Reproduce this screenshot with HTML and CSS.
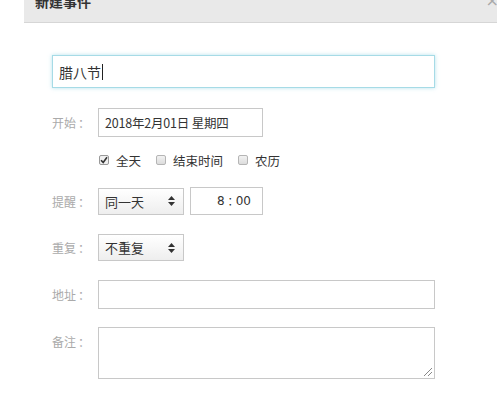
FILE: index.html
```html
<!DOCTYPE html>
<html lang="zh">
<head>
<meta charset="utf-8">
<link rel="stylesheet" href="styles.css">
</head>
<body>
<div class="header">
  <span class="title">新建事件</span>
  <span class="close">×</span>
</div>
<div class="form">
  <div class="title-input"><span class="title-text">腊八节</span><span class="caret"></span></div>

  <div class="row row-start">
    <span class="label">开始<span class="colon">：</span></span>
    <div class="box date">2018年2月01日 星期四</div>
  </div>

  <div class="checks">
    <span class="check checked"><svg width="8" height="8" viewBox="0 0 8 8"><path d="M1 4.2 L3.2 6.4 L7 1.2" fill="none" stroke="#333" stroke-width="1.6"/></svg></span><span class="ctext">全天</span>
    <span class="check"></span><span class="ctext">结束时间</span>
    <span class="check"></span><span class="ctext">农历</span>
  </div>

  <div class="row row-remind">
    <span class="label">提醒<span class="colon">：</span></span>
    <div class="select"><span>同一天</span><svg width="7" height="10" viewBox="0 0 7 10"><path d="M3.5 0 L7 4 L0 4 Z M0 6 L7 6 L3.5 10 Z" fill="#333"/></svg></div>
    <div class="box time">8<span class="tcolon">：</span>00</div>
  </div>

  <div class="row row-repeat">
    <span class="label">重复<span class="colon">：</span></span>
    <div class="select"><span>不重复</span><svg width="7" height="10" viewBox="0 0 7 10"><path d="M3.5 0 L7 4 L0 4 Z M0 6 L7 6 L3.5 10 Z" fill="#333"/></svg></div>
  </div>

  <div class="row row-addr">
    <span class="label">地址<span class="colon">：</span></span>
    <div class="box wide"></div>
  </div>

  <div class="row row-note">
    <span class="label">备注<span class="colon">：</span></span>
    <div class="box wide note"><svg class="grip" width="10" height="10" viewBox="0 0 10 10"><path d="M1 9 L9 1 M5 9 L9 5" stroke="#888" stroke-width="1"/></svg></div>
  </div>
</div>
</body>
</html>
```

FILE: styles.css
```css
* { box-sizing: border-box; }
body {
  margin: 0;
  background: #fff;
  font-family: "Noto Sans CJK SC", "Noto Sans", sans-serif;
  color: #333;
  width: 497px;
  height: 395px;
  overflow: hidden;
}
.header {
  margin-left: 24px;
  height: 23px;
  background: #e9e9e9;
  border-bottom: 1px solid #d6d6d6;
  display: flex;
  justify-content: space-between;
  align-items: flex-start;
}
.title {
  margin-left: 11px;
  margin-top: -8px;
  font-size: 14px;
  line-height: 18px;
  font-weight: bold;
  color: #333;
}
.close {
  margin-top: -8px;
  margin-right: -2px;
  font-size: 16px;
  line-height: 18px;
  color: #aaa;
  font-family: "DejaVu Sans", sans-serif;
}
.form {
  padding: 32px 0 0 52px;
  width: 435px;
}
.title-input {
  height: 33px;
  border: 1px solid #a6dbe6;
  box-shadow: 0 0 4px rgba(150, 215, 230, 0.7);
  display: flex;
  align-items: center;
  padding-left: 6px;
  font-size: 14px;
}
.caret {
  display: inline-block;
  width: 1px;
  height: 16px;
  background: #222;
  margin-left: 1px;
}
.row {
  display: flex;
  align-items: center;
}
.label {
  width: 46px;
  font-size: 12px;
  color: #aaa;
  flex: none;
}
.colon {
  font-family: "Noto Sans CJK TC", sans-serif;
  margin-left: 2px;
}
.tcolon {
  font-family: "Noto Sans CJK TC", sans-serif;
  font-size: 11px;
}
.box {
  border: 1px solid #c8c8c8;
  background: #fff;
  font-size: 13px;
  display: flex;
  align-items: center;
  color: #333;
}
.row-start { margin-top: 20px; }
.date {
  width: 165px;
  height: 29px;
  padding-left: 6px;
  font-size: 12.5px;
  letter-spacing: -0.2px;
}
.checks {
  margin-top: 16px;
  padding-left: 47px;
  height: 14px;
  display: flex;
  align-items: center;
  font-size: 12.5px;
}
.check {
  width: 10px;
  height: 10px;
  border: 1px solid #b5b5b5;
  background: linear-gradient(#f2f2f2, #dcdcdc);
  border-radius: 2px;
  display: inline-flex;
  align-items: center;
  justify-content: center;
  margin-right: 7px;
}
.check.checked {
  background: #f0f0f0;
  border-color: #999;
}
.ctext { margin-right: 15px; color: #333; }
.row-remind { margin-top: 20px; }
.select {
  width: 86px;
  height: 27px;
  border: 1px solid #c8c8c8;
  background: linear-gradient(#ffffff, #eeeeee);
  display: flex;
  align-items: center;
  justify-content: space-between;
  padding: 0 8px 0 6px;
  font-size: 13px;
}
.time {
  margin-left: 6px;
  width: 73px;
  height: 28px;
  justify-content: flex-end;
  padding-right: 11px;
  font-family: "DejaVu Sans", "Noto Sans CJK SC", sans-serif;
  font-size: 12px;
}
.row-repeat { margin-top: 19px; }
.row-addr { margin-top: 19px; }
.wide {
  width: 337px;
  height: 29px;
}
.row-note { margin-top: 18px; align-items: flex-start; }
.row-note .label { margin-top: 6px; }
.note {
  height: 52px;
  position: relative;
}
.grip {
  position: absolute;
  right: 1px;
  bottom: 1px;
}
```
